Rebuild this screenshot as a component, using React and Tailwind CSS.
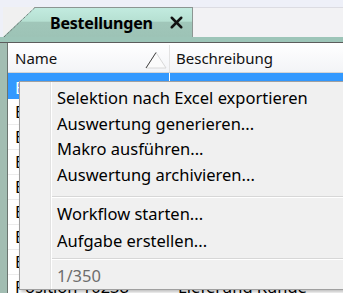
import { X } from 'lucide-react';

const rows = [
  'Bestellung 10231',
  'Bestellung 10232',
  'Bestellung 10233',
  'Bestellung 10234',
  'Bestellung 10235',
  'Bestellung 10236',
  'Bestellung 10237',
  'Position 10238',
];

const MenuItem = ({ children, h = 'h-[25.5px]', muted = false }) => (
  <div
    className={`flex ${h} items-center pl-[37px] ${muted ? 'text-[#6d6d6d]' : 'text-black'}`}
  >
    {children}
  </div>
);

const Separator = ({ top, bottom }) => (
  <div className={`ml-[32px] ${top} ${bottom}`}>
    <div className="h-px bg-[#d7d7d7]" />
    <div className="h-px bg-white" />
  </div>
);

export default function App() {
  return (
    <div
      className="relative h-[293px] w-[343px] overflow-hidden bg-[#eef0f8] text-[16px]"
      style={{ fontFamily: '"Noto Sans", "Open Sans", sans-serif' }}
    >
      {/* tab strip */}
      <div className="flex h-[37px] items-end bg-[#eef0f8] pl-[3px]">
        <div className="relative h-[30px] w-[190px]">
          <div className="absolute inset-0 bg-[#f0f0f0]" />
          <div className="absolute inset-0 border-r border-t border-[#8c9692] bg-[linear-gradient(#c2ebdf_0%,#b6e0d2_45%,#a0c6b9_50%,#9dc3b6_100%)] [clip-path:polygon(32px_0,100%_0,100%_100%,0_100%)]" />
          <svg className="absolute inset-0" width="190" height="30">
            <line x1="1" y1="30" x2="32" y2="0.5" stroke="#555" strokeWidth="1" strokeDasharray="1 1" />
          </svg>
          <div className="relative flex h-full items-center pl-[47px] pt-[1px]">
            <span className="text-[16px] font-bold tracking-[-0.2px] text-black">Bestellungen</span>
            <X className="ml-[14px] h-[19px] w-[19px] text-[#111]" strokeWidth={3.2} />
          </div>
        </div>
        <div className="h-[30px] flex-1 border-t border-[#dcdce2] bg-[#f2f2f4]" />
      </div>
      <div className="h-[5px] bg-[#9dc5b8]" />
      <div className="h-px bg-[#5c5c5c]" />

      {/* body */}
      <div className="flex">
        <div className="w-[7px] bg-[#a2bdb2]" />
        <div className="w-px bg-[#6b7570]" />
        <div className="flex-1 bg-white">
          {/* header */}
          <div className="flex h-[30px] items-center border-b border-[#d5d5d5] bg-[linear-gradient(#ffffff,#f3f4f7)] pt-[2px] text-[15px] text-[#111]">
            <div className="relative flex h-full w-[161px] items-center pl-[7px]">
              Name
              <svg className="absolute left-[137px] top-[7px]" width="22" height="17" viewBox="0 0 22 17">
                <path d="M1 16 L11 0.5 L21 16 Z" fill="#fbfbfb" stroke="#d8d8d8" />
                <line x1="1" y1="16" x2="11" y2="0.5" stroke="#444" />
              </svg>
            </div>
            <div className="h-full w-px bg-[#e3e3e3]" />
            <div className="pl-[6px]">Beschreibung</div>
          </div>
          {/* rows */}
          <div className="flex h-[27px] border-b border-white bg-[#3399ff] pl-[4px] text-white">
            <div className="w-[157px] pl-[3px] pt-[7px] text-[16.5px] leading-none">Bestellung 10230</div>
            <div className="w-px bg-white" />
          </div>
          {rows.map((r) => (
            <div key={r} className="flex h-[25px] border-b border-[#ececec] pl-[7px] text-[16.5px] text-black">
              <div className="flex w-[157px] items-center">{r}</div>
              <div className="flex items-center pl-[6px]">Lieferung Kunde</div>
            </div>
          ))}
        </div>
      </div>

      {/* context menu */}
      <div className="absolute left-[19px] top-[81px] h-[209px] w-[340px] border border-[#a0a0a0] bg-[#f0f0f0] pt-[4px] text-[16.5px] shadow-[2px_2px_3px_rgba(0,0,0,0.25)]">
        <div className="absolute bottom-0 left-[30px] top-0 w-px bg-[#e2e2e2]" />
        <div className="absolute bottom-0 left-[31px] top-0 w-px bg-white" />
        <div className="relative flex flex-col">
          <MenuItem>Selektion nach Excel exportieren</MenuItem>
          <MenuItem>Auswertung generieren...</MenuItem>
          <MenuItem>Makro ausführen...</MenuItem>
          <MenuItem>Auswertung archivieren...</MenuItem>
          <Separator top="mt-[8px]" bottom="mb-[3px]" />
          <MenuItem h="h-[27px]">Workflow starten...</MenuItem>
          <MenuItem h="h-[26px]">Aufgabe erstellen...</MenuItem>
          <Separator top="mt-[4px]" bottom="mb-[3px]" />
          <MenuItem h="h-[27px]" muted>1/350</MenuItem>
        </div>
      </div>
    </div>
  );
}
